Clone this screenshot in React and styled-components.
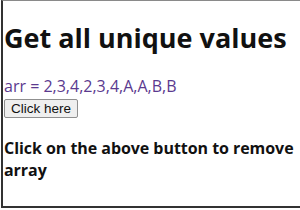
import React from 'react';
import styled, { createGlobalStyle } from 'styled-components';

const Global = createGlobalStyle`
  html, body {
    margin: 0;
    padding: 0;
    background: #fff;
  }
`;

const Frame = styled.div`
  box-sizing: border-box;
  width: 299px;
  height: 208px;
  margin-left: 1px;
  border-top: 1px solid #8a8a8a;
  border-left: 2px solid #333;
  border-bottom: 2px solid #333;
  padding: 0 0 0 1px;
  overflow: hidden;
  font-family: 'Open Sans', 'Noto Sans', sans-serif;
  color: #111;
`;

const Title = styled.h1`
  margin: 19px 0 0;
  font-size: 27px;
  font-weight: 700;
  line-height: 36px;
  white-space: nowrap;
`;

const ArrayText = styled.p`
  margin: 20px 0 0;
  font-size: 16px;
  line-height: 20px;
  color: #5b3a8f;
`;

const Button = styled.button`
  display: block;
  margin: 3px 0 0;
  padding: 1px 6px;
  font-family: 'Liberation Sans', Arial, sans-serif;
  font-size: 13.5px;
  color: #111;
  background: #efefef;
  border: 1px solid #8f8f8f;
  border-radius: 2px;
`;

const Note = styled.h3`
  margin: 19px 0 0;
  font-size: 16px;
  font-weight: 700;
  line-height: 22px;
  letter-spacing: -0.05px;
`;

export default function App() {
  return (
    <>
      <Global />
      <Frame>
        <Title>Get all unique values</Title>
        <ArrayText>arr = 2,3,4,2,3,4,A,A,B,B</ArrayText>
        <Button>Click here</Button>
        <Note>
          Click on the above button to remove
          <br />
          array
        </Note>
      </Frame>
    </>
  );
}
